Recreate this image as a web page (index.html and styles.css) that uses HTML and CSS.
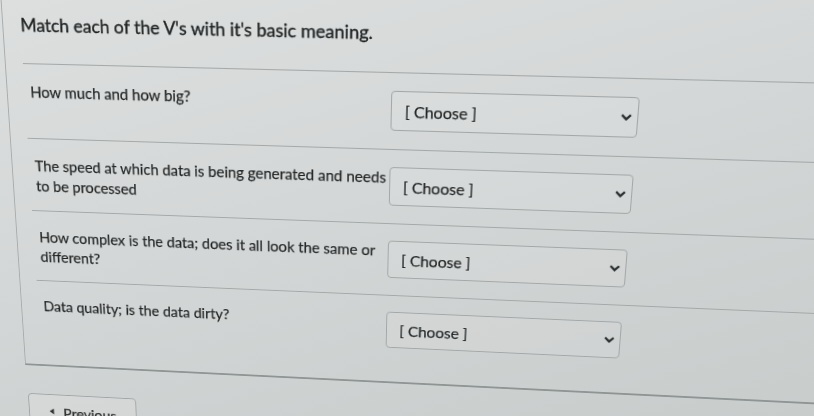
FILE: index.html
```html
<!DOCTYPE html>
<html lang="en">
<head>
    <meta charset="UTF-8">
    <meta name="viewport" content="width=device-width, initial-scale=1.0">
    <title>Quiz: Matching</title>
    <link rel="stylesheet" href="styles.css">
</head>
<body>
    <div class="page">
        <div class="question">
            <div class="question-text">Match each of the V's with it's basic meaning.</div>

            <div class="answers">
                <div class="answer">
                    <div class="answer-label">How much and how big?</div>
                    <div class="select">
                        <span>[ Choose ]</span>
                        <svg class="chevron" width="11" height="7" viewBox="0 0 11 7"><polyline points="1.2,1.2 5.5,5.4 9.8,1.2" /></svg>
                    </div>
                </div>
                <div class="answer">
                    <div class="answer-label">The speed at which data is being generated and needs to be processed</div>
                    <div class="select">
                        <span>[ Choose ]</span>
                        <svg class="chevron" width="11" height="7" viewBox="0 0 11 7"><polyline points="1.2,1.2 5.5,5.4 9.8,1.2" /></svg>
                    </div>
                </div>
                <div class="answer">
                    <div class="answer-label">How complex is the data; does it all look the same or different?</div>
                    <div class="select">
                        <span>[ Choose ]</span>
                        <svg class="chevron" width="11" height="7" viewBox="0 0 11 7"><polyline points="1.2,1.2 5.5,5.4 9.8,1.2" /></svg>
                    </div>
                </div>
                <div class="answer">
                    <div class="answer-label">Data quality; is the data dirty?</div>
                    <div class="select">
                        <span>[ Choose ]</span>
                        <svg class="chevron" width="11" height="7" viewBox="0 0 11 7"><polyline points="1.2,1.2 5.5,5.4 9.8,1.2" /></svg>
                    </div>
                </div>
            </div>
        </div>

        <div class="nav">
            <button class="btn-prev">
                <svg class="arrow" width="6" height="8" viewBox="0 0 6 8"><polygon points="5.5,0.5 5.5,7.5 0.5,4" /></svg>
                Previous
            </button>
        </div>
    </div>
</body>
</html>
```

FILE: styles.css
```css
html, body {
    margin: 0;
    height: 100%;
    overflow: hidden;
}

body {
    background: linear-gradient(165deg, #dcdfde 0%, #d4d7d7 45%, #c8cccb 100%);
    font-family: Lato, "Noto Sans", sans-serif;
    color: #1f2222;
}

/* the photo is taken at an angle, so the flat page is put in perspective */
.page {
    width: 900px;
    height: 470px;
    transform-origin: 0 0;
    transform: matrix3d(0.961962, 0.018395, 0, -0.0000810502,
                        0.070157, 1.042274, 0, 0.000236636,
                        0, 0, 1, 0,
                        -4.36008, -2.24729, 0, 1);
    text-shadow: 0 0 1px rgba(255, 255, 255, 0.7);
    -webkit-text-stroke: 0.25px #1f2222;
}

.question {
    margin-left: 5px;
    padding: 0 0 19px 18px;
    border-left: 1px solid #a7acac;
    border-bottom: 2px solid #8f9595;
}

.question-text {
    font-size: 18px;
    line-height: 28px;
    padding: 11px 0 24px 0;
    -webkit-text-stroke: 0.4px #1f2222;
}

.answer {
    display: flex;
    height: 75px;
    box-sizing: border-box;
    padding-top: 17px;
    border-top: 1px solid #a3a8a8;
}

.answer-label {
    flex: 0 0 376px;
    box-sizing: border-box;
    padding-left: 6px;
    font-size: 15.5px;
    line-height: 21px;
}

.select {
    flex: 0 0 242px;
    height: 39px;
    box-sizing: border-box;
    display: flex;
    align-items: center;
    justify-content: space-between;
    padding: 0 5px 0 13px;
    border: 1px solid #a2a7a8;
    border-radius: 4px;
    background-color: rgba(255, 255, 255, 0.08);
    font-size: 16px;
}

.chevron polyline {
    fill: none;
    stroke: #2a2d2d;
    stroke-width: 2.2;
}

.nav {
    padding: 32px 0 0 6px;
}

.btn-prev {
    width: 122px;
    height: 40px;
    box-sizing: border-box;
    display: flex;
    align-items: center;
    gap: 10px;
    padding: 0 0 0 22px;
    border: 1px solid #a0a5a6;
    border-radius: 4px;
    background-color: rgba(255, 255, 255, 0.12);
    font-family: Lato, "Noto Sans", sans-serif;
    font-size: 16px;
    color: #333;
}

.arrow polygon {
    fill: #333;
}
```
